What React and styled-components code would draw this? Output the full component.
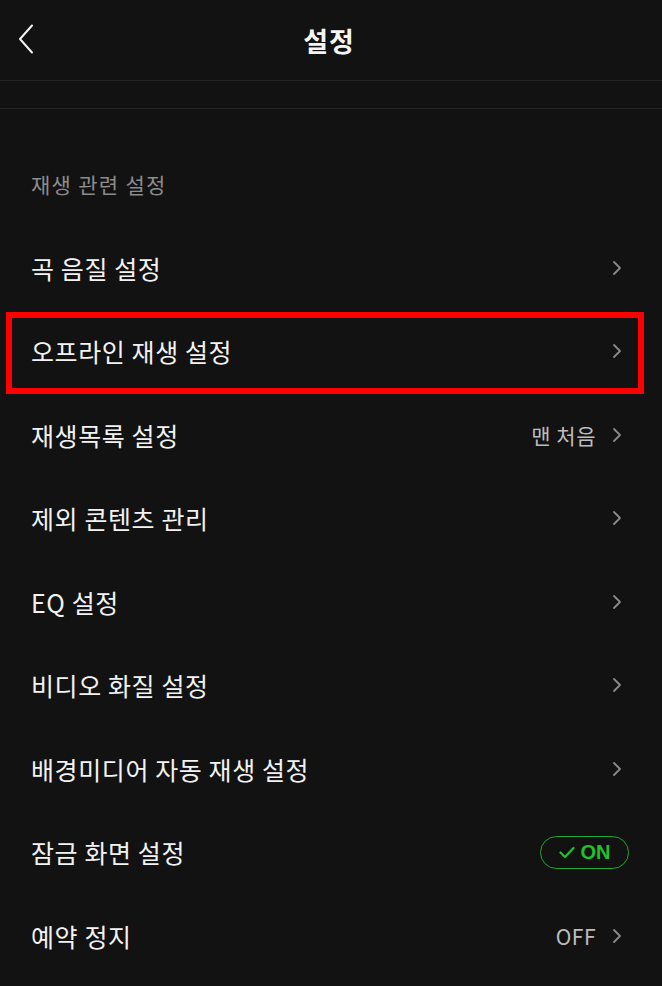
import React from 'react'
import styled, { createGlobalStyle } from 'styled-components'

const GlobalStyle = createGlobalStyle`
  html, body {
    margin: 0;
    padding: 0;
    background: #121212;
  }
  body {
    font-family: "Noto Sans CJK KR", "Noto Sans", sans-serif;
    color: #f2f2f2;
  }
`

const rows = [
  { label: '곡 음질 설정' },
  { label: '오프라인 재생 설정', highlighted: true },
  { label: '재생목록 설정', value: '맨 처음' },
  { label: '제외 콘텐츠 관리' },
  { label: 'EQ 설정' },
  { label: '비디오 화질 설정' },
  { label: '배경미디어 자동 재생 설정' },
  { label: '잠금 화면 설정', toggle: true },
  { label: '예약 정지', value: 'OFF' },
]

export default function App() {
  return (
    <Page>
      <GlobalStyle />
      <Header>
        <BackButton aria-label="back">
          <svg width="16" height="30" viewBox="0 0 16 30">
            <path d="M14 1.5 L2 15 L14 28.5" fill="none" stroke="#f2f2f2" strokeWidth="2" strokeLinecap="round" strokeLinejoin="round" />
          </svg>
        </BackButton>
        <Title>설정</Title>
      </Header>
      <Spacer />
      <SectionLabel>재생 관련 설정</SectionLabel>
      <List>
        {rows.map((row) => (
          <Row key={row.label} $highlighted={row.highlighted}>
            <RowLabel>{row.label}</RowLabel>
            {row.toggle ? (
              <OnBadge>
                <svg width="16" height="13" viewBox="0 0 16 13">
                  <path d="M1.5 6.5 L6 11 L14.5 2" fill="none" stroke="#22c02c" strokeWidth="2.2" strokeLinecap="round" strokeLinejoin="round" />
                </svg>
                ON
              </OnBadge>
            ) : (
              <Trail>
                {row.value && <Value>{row.value}</Value>}
                <Chevron />
              </Trail>
            )}
          </Row>
        ))}
      </List>
    </Page>
  )
}

function Chevron() {
  return (
    <svg width="10" height="16" viewBox="0 0 10 16">
      <path d="M2 2 L8 8 L2 14" fill="none" stroke="#8a8a8a" strokeWidth="1.8" strokeLinecap="round" strokeLinejoin="round" />
    </svg>
  )
}

const Page = styled.div`
  width: 662px;
  min-height: 986px;
  background: #121212;
`

const Header = styled.header`
  height: 80px;
  display: flex;
  align-items: center;
  justify-content: center;
  position: relative;
  border-bottom: 1px solid #232323;
`

const BackButton = styled.button`
  position: absolute;
  left: 18px;
  top: 24px;
  background: none;
  border: 0;
  padding: 0;
  display: flex;
`

const Title = styled.h1`
  margin: 0 0 0 -4px;
  font-size: 27px;
  font-weight: 700;
  letter-spacing: 1px;
  color: #f4f4f4;
`

const Spacer = styled.div`
  height: 27px;
  border-bottom: 1px solid #232323;
`

const SectionLabel = styled.div`
  margin: 60px 0 27px;
  padding-left: 31px;
  height: 30px;
  line-height: 30px;
  font-size: 21px;
  letter-spacing: 1.3px;
  color: #8c8c8c;
`

const List = styled.div`
  display: flex;
  flex-direction: column;
`

const Row = styled.div`
  position: relative;
  height: 83.5px;
  display: flex;
  align-items: center;
  justify-content: space-between;
  padding: 0 40px 0 31px;

  ${({ $highlighted }) => $highlighted && `
    &::after {
      content: '';
      position: absolute;
      left: 6px;
      right: 18px;
      top: 2px;
      bottom: -1px;
      border: 6px solid #ff0000;
      pointer-events: none;
    }
  `}
`

const RowLabel = styled.span`
  font-size: 25px;
  letter-spacing: 0.6px;
  color: #f2f2f2;
`

const Trail = styled.div`
  display: flex;
  align-items: center;
  gap: 16px;
`

const Value = styled.span`
  font-size: 21px;
  letter-spacing: 0.5px;
  color: #bdbdbd;
`

const OnBadge = styled.div`
  margin-right: -7px;
  width: 89px;
  height: 33px;
  box-sizing: border-box;
  border: 1.5px solid #1fa82a;
  border-radius: 17px;
  display: flex;
  align-items: center;
  justify-content: center;
  gap: 6px;
  font-family: "Liberation Sans", Arial, sans-serif;
  font-size: 20px;
  font-weight: 700;
  color: #22c02c;
`
